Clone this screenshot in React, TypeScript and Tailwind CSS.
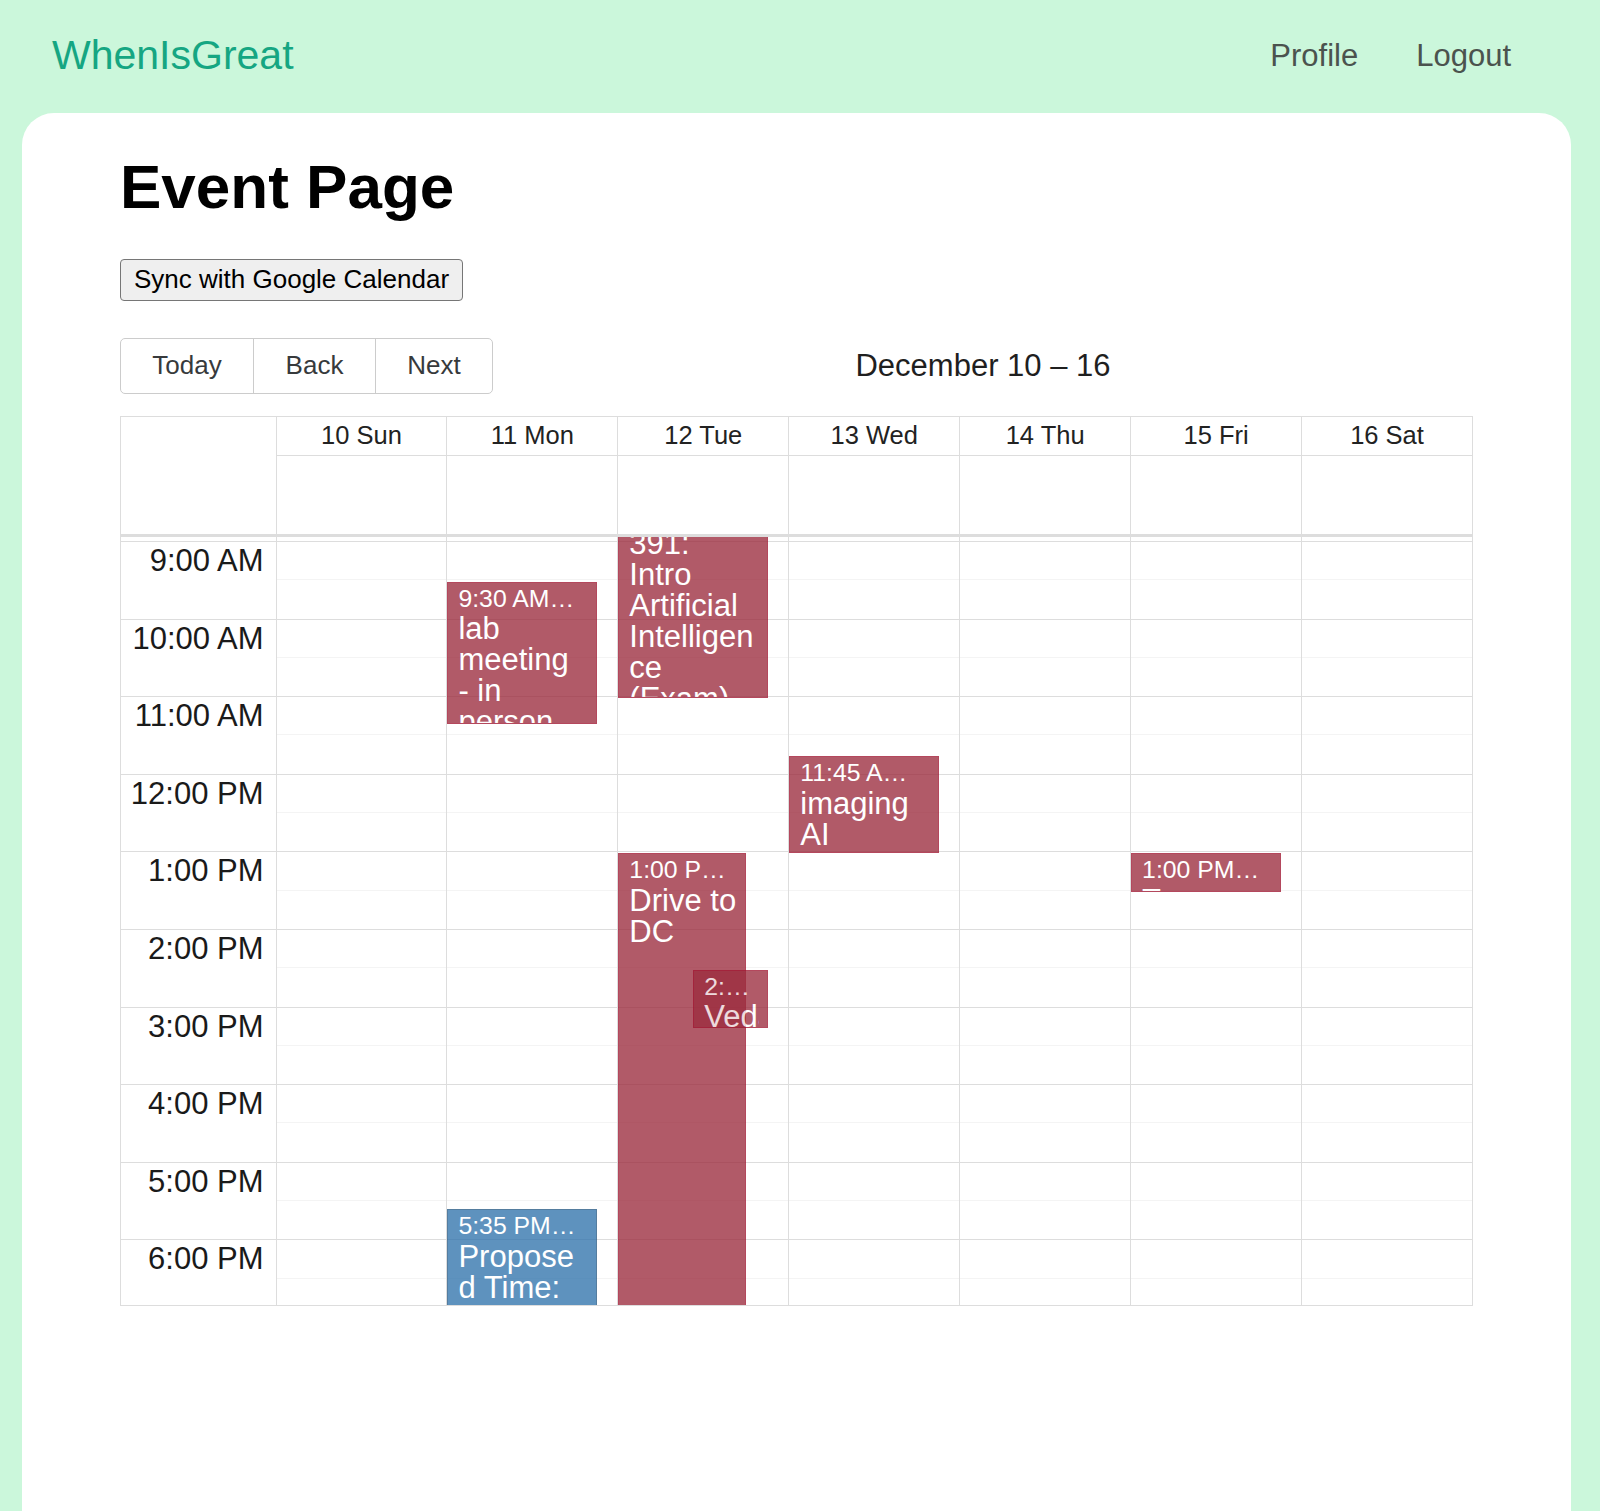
import React from "react";

const HOUR = 77.6;
const FIRST_HOUR = 8;

const days = ["10 Sun", "11 Mon", "12 Tue", "13 Wed", "14 Thu", "15 Fri", "16 Sat"];
const hours = [8, 9, 10, 11, 12, 13, 14, 15, 16, 17, 18];

type CalEvent = {
    id: string;
    day: number;
    start: number;
    end: number;
    label: string;
    title: React.ReactNode;
    blue?: boolean;
    left?: number;
    width?: number;
    nowrap?: boolean;
};

const events: CalEvent[] = [
    {
        id: "lab",
        day: 1,
        start: 9.5,
        end: 11 + 20 / 60,
        label: "9:30 AM – 11:20 AM",
        title: (
            <>
                lab meeting <span className="whitespace-nowrap">- in</span> person
            </>
        ),
    },
    { id: "proposed", day: 1, start: 17 + 35 / 60, end: 19, label: "5:35 PM – 7:00 PM", title: "Proposed Time: CMSC 391 Study Group", blue: true },
    { id: "exam", day: 2, start: 8, end: 11, label: "8:00 AM – 11:00 AM", title: "CMSC 391: Intro Artificial Intelligence (Exam)" },
    { id: "drive", day: 2, start: 13, end: 20, label: "1:00 PM – 8:00 PM", title: "Drive to DC", width: 85 },
    { id: "ved", day: 2, start: 14.5, end: 15.25, label: "2:30 PM – 3:15 PM", title: "Vedant", left: 50, width: 50, nowrap: true },
    { id: "imaging", day: 3, start: 11.75, end: 13, label: "11:45 AM – 1:00 PM", title: "imaging AI" },
    { id: "tour", day: 5, start: 13, end: 13.5, label: "1:00 PM – 1:30 PM", title: "Tour" },
];

function fmtHour(h: number) {
    const suffix = h < 12 ? "AM" : "PM";
    const v = h % 12 === 0 ? 12 : h % 12;
    return `${v}:00 ${suffix}`;
}

function EventBox({ ev }: { ev: CalEvent }) {
    return (
        <div
            className={
                "absolute flex flex-col overflow-hidden border pt-[2px] pl-[10px] pr-[8px] text-white opacity-[0.78] " +
                (ev.blue ? "bg-[#3174ad] border-[#265985]" : "bg-[#9c2c3e] border-[#a01530]")
            }
            style={{
                top: 1 + (ev.start - FIRST_HOUR) * HOUR,
                height: (ev.end - ev.start) * HOUR,
                left: `${ev.left ?? 0}%`,
                width: `${ev.width ?? 100}%`,
            }}
        >
            <div className="shrink-0 overflow-hidden text-ellipsis whitespace-nowrap pr-[8px] text-[24.8px] leading-[1.15]">
                {ev.label}
            </div>
            <div
                className={
                    "text-[31px] leading-none " +
                    (ev.nowrap ? "overflow-hidden whitespace-nowrap" : "break-words")
                }
            >
                {ev.title}
            </div>
        </div>
    );
}

export default function App() {
    return (
        <div className="h-[1511px] overflow-hidden bg-[#cbf7db] font-['Liberation_Sans',Arial,sans-serif]">
            <header className="flex h-[113px] items-start justify-between pl-[52px] pr-[89px]">
                <a className="mt-[35px] text-[41px] leading-[41px] text-[#15a682]">WhenIsGreat</a>
                <nav className="mt-[40px] flex gap-[58px] text-[31px] leading-[31px] text-[#4b534e]">
                    <a>Profile</a>
                    <a>Logout</a>
                </nav>
            </header>

            <main className="ml-[22px] mr-[29px] h-[1398px] rounded-t-[32px] bg-white px-[98px] pt-[42.5px]">
                <h1 className="text-[62px] font-bold leading-[62px] text-black">Event Page</h1>

                <div className="mt-[41.5px] flex">
                    <button className="flex h-[42px] items-center rounded-[4px] border border-[#767676] bg-[#efefef] px-[13px] text-[26px] leading-[1.15] text-black">
                        Sync with Google Calendar
                    </button>
                </div>

                {/* toolbar */}
                <div className="mt-[37px] flex items-center">
                    <div className="flex text-[26px] leading-[1.15] text-[#373a3c]">
                        <button className="flex h-[56px] w-[134px] items-center justify-center rounded-l-[5px] border border-[#ccc]">Today</button>
                        <button className="-ml-px flex h-[56px] w-[123px] items-center justify-center border border-[#ccc]">Back</button>
                        <button className="-ml-px flex h-[56px] w-[118px] items-center justify-center rounded-r-[5px] border border-[#ccc]">Next</button>
                    </div>
                    <div className="flex-1 text-center text-[31px] leading-[1.15] text-[#1f1f1f]">December 10 – 16</div>
                </div>

                {/* calendar */}
                <div className="mt-[22px] border border-[#ddd] text-[#222]">
                    <div className="flex">
                        <div className="h-[117px] w-[154.5px] shrink-0" />
                        {days.map((d) => (
                            <div key={d} className="flex flex-1 flex-col border-l border-[#ddd]">
                                <div className="flex h-[39px] items-center justify-center border-b border-[#ddd] text-[25.5px] leading-[1.15]">
                                    {d}
                                </div>
                                <div className="h-[78px]" />
                            </div>
                        ))}
                    </div>

                    <div className="relative h-[771px] overflow-hidden border-t-[3px] border-[#ddd]">
                        <div className="-mt-[72.6px] flex">
                            <div className="w-[154.5px] shrink-0">
                                {hours.map((h) => (
                                    <div key={h} className="h-[77.6px] border-b border-[#ddd] pr-[12px] pt-[1px] text-right text-[31px] leading-[1.15] text-[#1a1a1a]">
                                        {fmtHour(h)}
                                    </div>
                                ))}
                            </div>
                            {days.map((d, i) => (
                                <div key={d} className="relative flex-1 border-l border-[#ddd]">
                                    {hours.map((h) => (
                                        <div key={h} className="h-[77.6px] border-b border-[#ddd]">
                                            <div className="h-[38.3px] border-b border-[#f4f4f4]" />
                                        </div>
                                    ))}
                                    <div className="absolute inset-y-0 left-0 right-[20px]">
                                        {events
                                            .filter((ev) => ev.day === i)
                                            .map((ev) => (
                                                <EventBox key={ev.id} ev={ev} />
                                            ))}
                                    </div>
                                </div>
                            ))}
                        </div>
                    </div>
                </div>
            </main>
        </div>
    );
}
